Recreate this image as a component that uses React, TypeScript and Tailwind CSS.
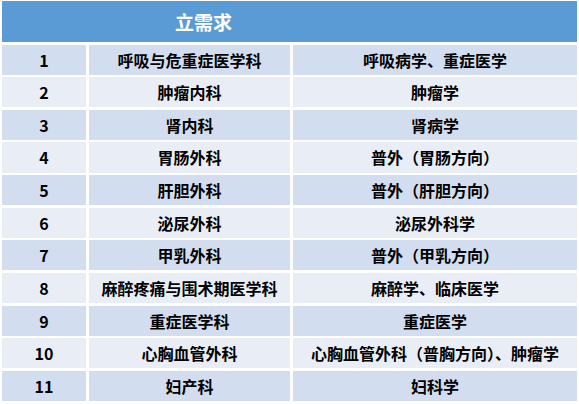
const rows: [string, string, string][] = [
  ['1', '呼吸与危重症医学科', '呼吸病学、重症医学'],
  ['2', '肿瘤内科', '肿瘤学'],
  ['3', '肾内科', '肾病学'],
  ['4', '胃肠外科', '普外（胃肠方向）'],
  ['5', '肝胆外科', '普外（肝胆方向）'],
  ['6', '泌尿外科', '泌尿外科学'],
  ['7', '甲乳外科', '普外（甲乳方向）'],
  ['8', '麻醉疼痛与围术期医学科', '麻醉学、临床医学'],
  ['9', '重症医学科', '重症医学'],
  ['10', '心胸血管外科', '心胸血管外科（普胸方向）、肿瘤学'],
  ['11', '妇产科', '妇科学'],
];

export default function App() {
  return (
    <div
      className="w-[579px] h-[404px] bg-white pt-[1px] pl-[2px]"
      style={{ fontFamily: '"Noto Sans CJK SC", "Microsoft YaHei", sans-serif' }}
    >
      <div className="grid w-[575px] h-[400px] grid-cols-[84px_201px_284px] grid-rows-[41px_repeat(11,1fr)] gap-x-[3px] gap-y-[2.5px] text-[16px] font-bold text-black">
        <div className="col-span-2 bg-[#5b9bd5] -mr-[3px] flex items-center pl-[173px] text-white text-[19px] leading-none">
          立需求
        </div>
        <div className="bg-[#5b9bd5]" />
        {rows.map(([no, dept, major], i) => {
          const bg = i % 2 === 0 ? 'bg-[#d2deef]' : 'bg-[#e9eef6]';
          return [
            <div key={no + 'a'} className={`${bg} flex items-center justify-center leading-none`}>
              {no}
            </div>,
            <div key={no + 'b'} className={`${bg} flex items-center justify-center leading-none`}>
              {dept}
            </div>,
            <div key={no + 'c'} className={`${bg} flex items-center justify-center leading-none`}>
              {major}
            </div>,
          ];
        })}
      </div>
    </div>
  );
}
